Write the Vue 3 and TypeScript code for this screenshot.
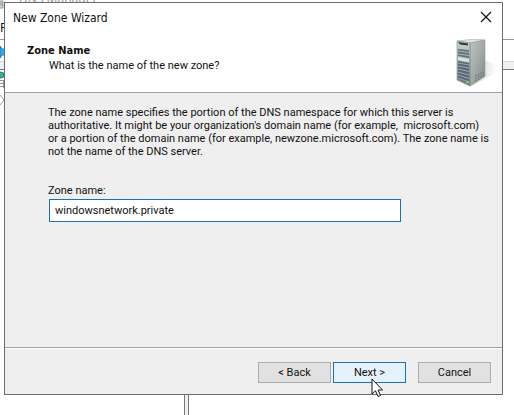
<script setup lang="ts">
import { ref } from 'vue'

const zoneName = ref<string>('windowsnetwork.private')

const description: string[] = [
  'The zone name specifies the portion of the DNS namespace for which this server is',
  "authoritative. It might be your organization's domain name (for example,\u00a0 microsoft.com)",
  'or a portion of the domain name (for example, newzone.microsoft.com). The zone name is',
  'not the name of the DNS server.',
]
</script>

<template>
  <div class="desktop">
    <div class="manager" aria-hidden="true">
      <div class="manager-title">
        <svg width="5" height="9" viewBox="0 0 5 9">
          <path d="M0 1h3v7H0M0 3h3M0 5h3" fill="#d8dcde" stroke="#8b9194" />
        </svg>
        <span>DNS Manager</span>
      </div>
      <div class="manager-menu">F</div>
      <div class="manager-tools">
        <svg width="5" height="14" viewBox="0 0 5 14">
          <path d="M0 1l2 3h3v6H2l-2 3z" fill="#38a8e8" stroke="#1c7fc0" />
        </svg>
      </div>
      <div class="manager-band"></div>
      <div class="manager-panes">
        <div class="tree">
          <svg width="5" height="36" viewBox="0 0 5 36">
            <circle cx="1" cy="5" r="3" fill="#3fa89a" stroke="#237e72" />
            <path d="M0 10.500h3M0 13.500h3M0 16.500h3M3.500 10v8" stroke="#8d9396" fill="none" />
            <path d="M0 25l4 5-4 5" stroke="#a0a0a0" fill="none" />
          </svg>
        </div>
        <div class="splitter"></div>
        <div class="details"></div>
      </div>
    </div>

    <form class="dialog" role="dialog" aria-labelledby="dialog-title" @submit.prevent>
      <header class="head">
        <div class="head-text">
          <div id="dialog-title" class="title">New Zone Wizard</div>
          <h1>Zone Name</h1>
          <p class="question">What is the name of the new zone?</p>
        </div>
        <div class="head-side">
          <button type="button" class="close" aria-label="Close">
            <svg width="12" height="12" viewBox="0 0 12 12">
              <path d="M1 1l10 10M11 1L1 11" stroke="#111" stroke-width="1.200" fill="none" />
            </svg>
          </button>
          <svg class="server" width="42" height="50" viewBox="0 0 42 50" aria-hidden="true">
            <defs>
              <linearGradient id="side" x1="0" y1="0" x2="1" y2="1">
                <stop offset="0" stop-color="#bdc4c3" />
                <stop offset="0.500" stop-color="#a2aaa8" />
                <stop offset="1" stop-color="#7e8785" />
              </linearGradient>
              <linearGradient id="front" x1="0" y1="0" x2="0" y2="1">
                <stop offset="0" stop-color="#c9d0d2" />
                <stop offset="1" stop-color="#7d888c" />
              </linearGradient>
              <linearGradient id="shade" x1="0" y1="0" x2="1" y2="0">
                <stop offset="0" stop-color="#c4c4c4" />
                <stop offset="1" stop-color="#ffffff" />
              </linearGradient>
            </defs>
            <path d="M28 21l12 4v9L15 47z" fill="url(#shade)" />
            <path d="M1 2L18 0l11 1-15 3z" fill="#dfe4e3" stroke="#969f9e" stroke-width="0.500" />
            <path d="M14 4l15-3v36L14 47z" fill="url(#side)" stroke="#89918f" stroke-width="0.500" />
            <path d="M1 2l13 2v43L1 41z" fill="url(#front)" stroke="#69757a" stroke-width="0.500" />
            <path d="M2 3l10 1.500v2L4 5.500z" fill="#303a40" />
            <path d="M2 10l11 1v8L2 17z" fill="#647580" />
            <path d="M2 12l11 1.500M2 15l11 1.500" stroke="#a9b5ba" />
            <path d="M2 18l11 2v3L2 21z" fill="#dce3e4" />
            <path d="M2 22l11 2v21L2 40z" fill="#596974" />
            <path d="M2 24l11 2M2 27l11 2M2 30l11 2.500M2 33l11 3M2 36l11 3.500M2 39l11 4" stroke="#a3afb5" stroke-width="0.900" />
            <path d="M19 37l9-4M19 39.500l9-4M19 42l9-4.500" stroke="#68726f" stroke-width="0.900" stroke-dasharray="2 1" />
            <circle cx="11.500" cy="43" r="1.300" fill="#8fdc50" />
          </svg>
        </div>
      </header>

      <main class="body">
        <p class="description">
          <span v-for="line in description" :key="line">{{ line }}</span>
        </p>
        <label for="zone-name">Zone name:</label>
        <input id="zone-name" v-model="zoneName" type="text" spellcheck="false" autocomplete="off" />
      </main>

      <footer class="actions">
        <div class="pair">
          <button type="button" class="btn">&lt; Back</button>
          <button type="submit" class="btn primary">
            Next &gt;
            <svg class="pointer" width="13" height="20" viewBox="0 0 13 20" aria-hidden="true">
              <path d="M1 1v15l3.500-3.300L7 18.500l2.500-1L7 12h4.500z" fill="#fff" stroke="#15151f" />
            </svg>
          </button>
        </div>
        <button type="button" class="btn">Cancel</button>
      </footer>
    </form>
  </div>
</template>

<style>
body {
  background: #fff;
}
</style>

<style scoped>
.desktop {
  position: relative;
  box-sizing: border-box;
  display: flex;
  min-height: 100vh;
  padding: 2px 11px 20px 4px;
  overflow: hidden;
  font-family: Roboto, 'DejaVu Sans Condensed', sans-serif;
  font-size: 11px;
  line-height: 13px;
  color: #111;
}

.manager {
  position: absolute;
  inset: 0;
  display: flex;
  flex-direction: column;
  font-family: 'Noto Sans', sans-serif;
  font-size: 12px;
}

.manager-title {
  display: flex;
  gap: 14px;
  height: 20px;
  color: #999;
}

.manager-title span {
  margin-top: -8px;
}

.manager-title svg,
.manager-tools svg,
.tree svg {
  flex: none;
  display: block;
}

.manager-menu {
  height: 19px;
  line-height: 16px;
}

.manager-tools {
  height: 22px;
  padding-top: 5px;
  box-sizing: border-box;
  border-top: 1px solid #999;
}

.manager-band {
  height: 7px;
  border-top: 1px solid #d4d4d4;
  background: #f0f0f0;
}

.manager-panes {
  flex: 1;
  display: flex;
  border-top: 1px solid #777;
}

.tree {
  width: 184px;
}

.splitter {
  width: 3px;
  border: 1px solid #777;
  border-width: 0 1px;
  background: #f0f0f0;
}

.details {
  flex: 1;
}

.dialog {
  position: relative;
  flex: 1;
  min-width: 0;
  display: flex;
  flex-direction: column;
  border: 1px solid #6c6c6f;
  background: #efefef;
}

.head {
  display: flex;
  justify-content: space-between;
  height: 89px;
  border-bottom: 1px solid #a0a0a0;
  background: #fff;
}

.title {
  padding: 6px 0 0 8px;
  font-family: 'DejaVu Sans Condensed', sans-serif;
  font-size: 12px;
  line-height: 18px;
}

h1 {
  margin: 16px 0 0 22px;
  font-family: 'DejaVu Sans Condensed', sans-serif;
  font-size: 11px;
  line-height: 15px;
}

.question {
  margin: 0 0 0 44px;
  line-height: 15px;
}

.head-side {
  display: flex;
  flex-direction: column;
  align-items: flex-end;
  gap: 16px;
  padding: 8px 4px 0 0;
}

.close {
  width: 24px;
  height: 12px;
  padding: 0 6px;
  border: 0;
  background: none;
}

.close svg,
.server {
  display: block;
}

.body {
  flex: 1;
  display: flex;
  flex-direction: column;
  padding: 13px 20px 20px 43px;
}

.description {
  margin: 0 0 26px;
}

.description span {
  display: block;
  white-space: nowrap;
}

label {
  margin-bottom: 2px;
}

input {
  box-sizing: border-box;
  width: 81%;
  height: 23px;
  margin-left: 1px;
  padding: 0 5px 1px;
  border: 1px solid #1b72ae;
  outline: none;
  background: #fff;
  color: #111;
  font: inherit;
}

.actions {
  display: flex;
  justify-content: flex-end;
  gap: 12px;
  padding: 14px 11px 11px;
  border-top: 1px solid #a0a0a0;
  box-shadow: inset 0 1px #fff;
}

.pair {
  display: flex;
  gap: 2px;
}

.btn {
  position: relative;
  width: 73px;
  height: 21px;
  padding: 0;
  border: 1px solid #adadad;
  background: #e1e1e1;
  color: #111;
  font: inherit;
}

.btn.primary {
  border-color: #1b72bd;
  background: #e5f1fb;
}

.pointer {
  position: absolute;
  top: 15px;
  left: 37px;
}
</style>
